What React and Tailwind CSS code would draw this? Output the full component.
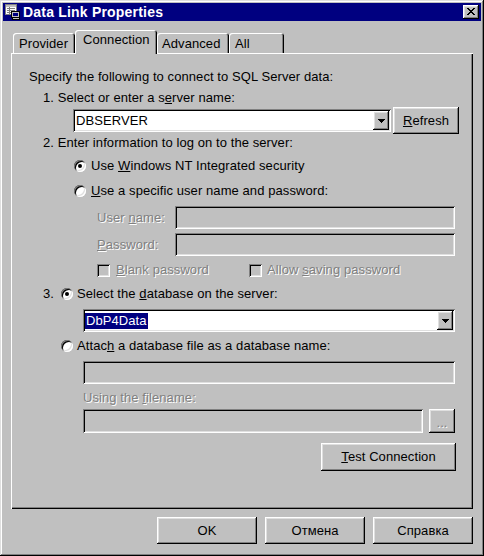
import React from "react";

const FONT = "font-['Liberation_Sans',Arial,sans-serif]";
const RAISED =
  "shadow-[inset_-1px_-1px_0_#000,inset_1px_1px_0_#fff,inset_-2px_-2px_0_#808080,inset_2px_2px_0_#dfdfdf]";
const SUNKEN =
  "shadow-[inset_1px_1px_0_#808080,inset_-1px_-1px_0_#fff,inset_2px_2px_0_#000,inset_-2px_-2px_0_#dfdfdf]";
const DISABLED = "text-[#808080] [text-shadow:1px_1px_0_#fff]";
const TAB =
  "rounded-t-[3px] bg-[#c0c0c0] text-left whitespace-nowrap shadow-[inset_1px_1px_0_#fff,inset_-1px_0_0_#000,inset_-2px_0_0_#808080]";

// icono de la barra de titulo
const TitleIcon = () => (
  <svg width="16" height="16" viewBox="0 0 16 16" shapeRendering="crispEdges">
    <rect x="0" y="0" width="12" height="11" fill="#808080" />
    <rect x="1" y="1" width="10" height="9" fill="#fff" />
    <rect x="1" y="1" width="10" height="2" fill="#c0c0c0" />
    <rect x="2" y="4" width="8" height="1" fill="#808080" />
    <rect x="2" y="6" width="8" height="1" fill="#808080" />
    <rect x="2" y="8" width="4" height="1" fill="#808080" />
    <rect x="4" y="3" width="1" height="7" fill="#808080" />
    <rect x="6" y="7" width="9" height="7" fill="#000" />
    <rect x="7" y="8" width="7" height="5" fill="#c0c0c0" />
    <rect x="8" y="9" width="5" height="3" fill="#000080" />
    <rect x="7" y="14" width="8" height="2" fill="#000" />
    <rect x="8" y="14" width="6" height="1" fill="#c0c0c0" />
  </svg>
);

const CloseGlyph = () => {
  const rows = ["11000011", "01100110", "00111100", "00011000", "00111100", "01100110", "11000011"];
  return (
    <svg width="8" height="7" viewBox="0 0 8 7" shapeRendering="crispEdges">
      {rows.flatMap((r, y) =>
        r.split("").map((c, x) => (c === "1" ? <rect key={`${x}-${y}`} x={x} y={y} width="1" height="1" fill="#000" /> : null))
      )}
    </svg>
  );
};

const Arrow = () => (
  <svg width="7" height="4" viewBox="0 0 7 4" shapeRendering="crispEdges">
    <path d="M0 0H7V1H6V2H5V3H4V4H3V3H2V2H1V1H0Z" fill="#000" />
  </svg>
);

const Radio = ({ checked }) => (
  <span className={`flex h-[12px] w-[12px] shrink-0 items-center justify-center rounded-full bg-white ${SUNKEN}`}>
    {checked && <span className="h-[4px] w-[4px] rounded-full bg-black" />}
  </span>
);

const Check = () => <span className={`h-[13px] w-[13px] shrink-0 bg-[#c0c0c0] ${SUNKEN}`} />;

const Combo = ({ className, children }) => (
  <div className={`flex h-[23px] shrink-0 bg-white p-[2px] ${SUNKEN} ${className}`}>
    <div className="flex flex-1 items-center overflow-hidden">{children}</div>
    <div className={`flex w-[16px] items-center justify-center bg-[#c0c0c0] ${RAISED}`}>
      <Arrow />
    </div>
  </div>
);

const Field = ({ className }) => <div className={`shrink-0 bg-[#c0c0c0] ${SUNKEN} ${className}`} />;

const Button = ({ className, children }) => (
  <button type="button" className={`flex shrink-0 items-center justify-center bg-[#c0c0c0] ${RAISED} ${className}`}>
    {children}
  </button>
);

export default function App() {
  return (
    <div
      className={`flex h-[556px] w-[484px] flex-col bg-[#c0c0c0] p-[3px] text-[13px] leading-[16px] tracking-[0.08px] text-black ${FONT} shadow-[inset_-1px_-1px_0_#000,inset_1px_1px_0_#dfdfdf,inset_-2px_-2px_0_#808080,inset_2px_2px_0_#fff]`}
    >
      {/* Barra de titulo */}
      <div className="flex h-[18px] shrink-0 items-center bg-[#000080] px-[2px]">
        <TitleIcon />
        <span className="ml-[2px] text-[14px] font-bold tracking-[0.2px] text-white">Data Link Properties</span>
        <div className={`ml-auto flex h-[14px] w-[16px] items-center justify-center bg-[#c0c0c0] pb-[1px] ${RAISED}`}>
          <CloseGlyph />
        </div>
      </div>

      {/* Pestañas */}
      <div className="ml-[8px] mt-[9px] flex h-[23px] shrink-0 items-end pl-[2px]">
        <div className={`${TAB} h-[20px] w-[62px] pl-[6px] pt-[3px]`}>Provider</div>
        <div className={`${TAB} relative z-10 -mb-[1px] h-[24px] w-[82px] pl-[8px] pt-[2px]`}>Connection</div>
        <div className={`${TAB} h-[20px] w-[72px] pl-[5px] pt-[3px]`}>Advanced</div>
        <div className={`${TAB} h-[20px] w-[55px] pl-[6px] pt-[3px]`}>All</div>
      </div>

      {/* Panel */}
      <div className="ml-[8px] flex h-[456px] w-[462px] shrink-0 flex-col shadow-[inset_1px_1px_0_#fff,inset_-1px_-1px_0_#000,inset_-2px_-2px_0_#808080]">
        <div className="ml-[18px] mt-[16px] h-[16px]">Specify the following to connect to SQL Server data:</div>
        <div className="ml-[32px] mt-[5px] h-[16px]">
          1. Select or enter a s<u>e</u>rver name:
        </div>
        <div className="ml-[62px] mt-[1px] flex h-[27px] items-center gap-[2px]">
          <Combo className="w-[318px]">
            <span className="pl-[1px]">DBSERVER</span>
          </Combo>
          <Button className="h-[27px] w-[66px]">
            <span>
              <u>R</u>efresh
            </span>
          </Button>
        </div>
        <div className="ml-[32px] mt-[1px] h-[16px]">2. Enter information to log on to the server:</div>
        <div className="ml-[63px] mt-[7px] flex h-[16px] items-center gap-[5px]">
          <Radio checked />
          <span>
            Use <u>W</u>indows NT Integrated security
          </span>
        </div>
        <div className="ml-[63px] mt-[9px] flex h-[16px] items-center gap-[5px]">
          <Radio />
          <span>
            <u>U</u>se a specific user name and password:
          </span>
        </div>
        <div className="ml-[86px] mt-[7px] flex h-[23px] items-center">
          <span className={`w-[78px] ${DISABLED}`}>
            User <u>n</u>ame:
          </span>
          <Field className="h-[23px] w-[280px]" />
        </div>
        <div className="ml-[86px] mt-[4px] flex h-[23px] items-center">
          <span className={`w-[78px] ${DISABLED}`}>
            <u>P</u>assword:
          </span>
          <Field className="h-[23px] w-[280px]" />
        </div>
        <div className="ml-[86px] mt-[6px] flex h-[16px] items-center">
          <div className="flex w-[152px] items-center gap-[6px]">
            <Check />
            <span className={DISABLED}>
              <u>B</u>lank password
            </span>
          </div>
          <div className="flex items-center gap-[5px]">
            <Check />
            <span className={DISABLED}>
              Allow <u>s</u>aving password
            </span>
          </div>
        </div>
        <div className="ml-[32px] mt-[8px] flex h-[16px] items-center">
          <span className="w-[18px]">3.</span>
          <Radio checked />
          <span className="ml-[4px]">
            Select the <u>d</u>atabase on the server:
          </span>
        </div>
        <Combo className="ml-[72px] mt-[7px] w-[372px]">
          <span className="bg-[#000080] pl-[1px] pr-[1px] text-white">DbP4Data</span>
        </Combo>
        <div className="ml-[50px] mt-[6px] flex h-[16px] items-center gap-[4px]">
          <Radio />
          <span>
            Attac<u>h</u> a database file as a database name:
          </span>
        </div>
        <Field className="ml-[72px] mt-[7px] h-[23px] w-[372px]" />
        <div className={`ml-[72px] mt-[6px] h-[16px] ${DISABLED}`}>
          Using the <u>f</u>ilename:
        </div>
        <div className="ml-[72px] mt-[3px] flex h-[24px] gap-[6px]">
          <Field className="h-[24px] w-[340px]" />
          <Button className={`h-[24px] w-[26px] pt-[4px] ${DISABLED}`}>...</Button>
        </div>
        <Button className="ml-[310px] mt-[10px] h-[28px] w-[135px]">
          <span>
            <u>T</u>est Connection
          </span>
        </Button>
      </div>

      {/* Botones del dialogo */}
      <div className="ml-[154px] mt-[8px] flex gap-[8px]">
        <Button className="h-[27px] w-[100px]">OK</Button>
        <Button className="h-[27px] w-[100px]">Отмена</Button>
        <Button className="h-[27px] w-[100px]">Справка</Button>
      </div>
    </div>
  );
}
